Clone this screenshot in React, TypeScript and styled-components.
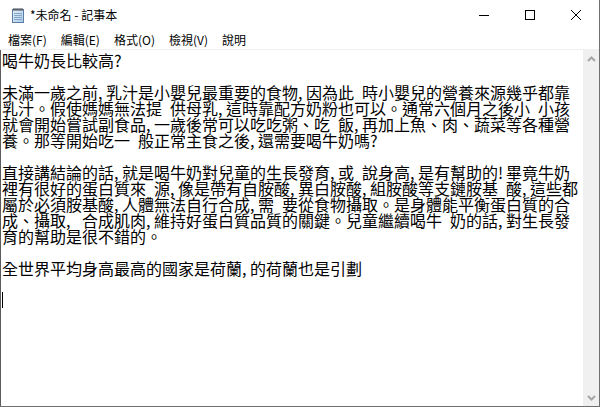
import React from "react";
import styled, { createGlobalStyle } from "styled-components";

const GlobalStyle = createGlobalStyle`
  html, body { margin: 0; padding: 0; background: #ffffff; overflow: hidden; }
  * { box-sizing: border-box; }
`;

const UI_FONT = `"Noto Sans CJK TC", "Noto Sans", sans-serif`;

const Window = styled.div`
  width: 600px;
  height: 407px;
  display: flex;
  flex-direction: column;
  background: #ffffff;
  border-right: 1px solid #6f6f6f;
  border-bottom: 1px solid #6f6f6f;
  font-family: ${UI_FONT};
  color: #000;
`;

const TitleBar = styled.div`
  height: 30px;
  display: flex;
  align-items: center;
  flex-shrink: 0;
`;

const AppIcon = styled.svg`
  width: 16px;
  height: 16px;
  margin-left: 10px;
  margin-top: -1px;
`;

const TitleText = styled.div`
  margin-left: 4px;
  font-size: 12px;
  line-height: 16px;
  flex: 1;
`;

const ControlButton = styled.div`
  width: 46px;
  height: 30px;
  display: flex;
  align-items: center;
  justify-content: center;
`;

const MenuBar = styled.div`
  height: 18px;
  padding-top: 1px;
  display: flex;
  border-bottom: 1px solid #f0f0f0;
  flex-shrink: 0;
  box-sizing: content-box;
`;

const MenuItem = styled.div`
  padding: 0 7px;
  font-size: 12px;
  line-height: 18px;
  white-space: nowrap;
  &:first-child {
    padding-left: 8px;
  }
`;

const EditArea = styled.div`
  flex: 1;
  display: flex;
  min-height: 0;
`;

const TextPane = styled.div`
  flex: 1;
  border-left: 1px solid #5c5c5c;
  padding: 2px 0 0 1px;
  overflow: hidden;
`;

const Line = styled.div`
  height: 16px;
  font-family: "Noto Sans CJK TC", "Noto Sans CJK SC", sans-serif;
  font-size: 16px;
  line-height: 16px;
  white-space: pre;
  color: #000;
`;

const Half = styled.span`
  display: inline-block;
  width: 8px;
`;

const Caret = styled.span`
  display: inline-block;
  width: 1px;
  height: 16px;
  background: #000;
  vertical-align: top;
`;

const ScrollBar = styled.div`
  width: 16px;
  background: #f0f0f0;
  display: flex;
  flex-direction: column;
  justify-content: space-between;
`;

const ScrollArrow = styled.div`
  height: 17px;
  display: flex;
  align-items: center;
  justify-content: center;
`;

const lines: string[] = [
  "喝牛奶長比較高?",
  "",
  "未滿一歲之前,乳汁是小嬰兒最重要的食物,因為此 時小嬰兒的營養來源幾乎都靠",
  "乳汁。假使媽媽無法提 供母乳,這時靠配方奶粉也可以。通常六個月之後小 小孩",
  "就會開始嘗試副食品,一歲後常可以吃吃粥、吃 飯,再加上魚、肉、蔬菜等各種營",
  "養。那等開始吃一 般正常主食之後,還需要喝牛奶嗎?",
  "",
  "直接講結論的話,就是喝牛奶對兒童的生長發育,或 說身高,是有幫助的!畢竟牛奶",
  "裡有很好的蛋白質來 源,像是帶有自胺酸,異白胺酸,組胺酸等支鏈胺基 酸,這些都",
  "屬於必須胺基酸,人體無法自行合成,需 要從食物攝取。是身體能平衡蛋白質的合",
  "成、攝取, 合成肌肉,維持好蛋白質品質的關鍵。兒童繼續喝牛 奶的話,對生長發",
  "育的幫助是很不錯的。",
  "",
  "全世界平均身高最高的國家是荷蘭,的荷蘭也是引劃",
  "",
];

function renderLine(s: string): React.ReactNode[] {
  const parts: React.ReactNode[] = [];
  let buf = "";
  let k = 0;
  for (const ch of s) {
    if (ch.charCodeAt(0) < 128) {
      if (buf) {
        parts.push(buf);
        buf = "";
      }
      parts.push(<Half key={k++}>{ch}</Half>);
    } else {
      buf += ch;
    }
  }
  if (buf) parts.push(buf);
  return parts;
}

const NotepadIcon = () => (
  <AppIcon viewBox="0 0 16 16">
    <defs>
      <linearGradient id="pg" x1="0" y1="0" x2="1" y2="1">
        <stop offset="0" stopColor="#e6f1fb" />
        <stop offset="1" stopColor="#a9c9ea" />
      </linearGradient>
    </defs>
    <rect x="2.5" y="2.5" width="11" height="13" fill="url(#pg)" stroke="#5b7da3" />
    {[6, 8, 10, 12].map((y) => (
      <line key={y} x1="4" x2="12" y1={y + 0.5} y2={y + 0.5} stroke="#87a7c9" />
    ))}
    {[4, 6, 8, 10, 12].map((x) => (
      <rect key={x} x={x - 0.5} y="1" width="1" height="3" fill="#4a4a4a" />
    ))}
  </AppIcon>
);

const Chevron = ({ up }: { up: boolean }) => (
  <svg width="9" height="6" viewBox="0 0 9 6">
    <polyline
      points={up ? "1,5 4.5,1.5 8,5" : "1,1 4.5,4.5 8,1"}
      fill="none"
      stroke="#a6a6a6"
      strokeWidth="2"
    />
  </svg>
);

export default function App() {
  return (
    <>
      <GlobalStyle />
      <Window>
        <TitleBar>
          <NotepadIcon />
          <TitleText>*未命名 - 記事本</TitleText>
          <ControlButton>
            <svg width="10" height="10" viewBox="0 0 10 10">
              <line x1="0" x2="10" y1="5.5" y2="5.5" stroke="#000" />
            </svg>
          </ControlButton>
          <ControlButton>
            <svg width="10" height="10" viewBox="0 0 10 10">
              <rect x="0.5" y="0.5" width="9" height="9" fill="none" stroke="#000" />
            </svg>
          </ControlButton>
          <ControlButton>
            <svg width="10" height="10" viewBox="0 0 10 10">
              <path d="M0 0 L10 10 M10 0 L0 10" stroke="#000" strokeWidth="1" />
            </svg>
          </ControlButton>
        </TitleBar>
        <MenuBar>
          <MenuItem>檔案(F)</MenuItem>
          <MenuItem>編輯(E)</MenuItem>
          <MenuItem>格式(O)</MenuItem>
          <MenuItem>檢視(V)</MenuItem>
          <MenuItem>說明</MenuItem>
        </MenuBar>
        <EditArea>
          <TextPane>
            {lines.map((l, i) => (
              <Line key={i}>{renderLine(l)}</Line>
            ))}
            <Line>
              <Caret />
            </Line>
          </TextPane>
          <ScrollBar>
            <ScrollArrow>
              <Chevron up />
            </ScrollArrow>
            <ScrollArrow>
              <Chevron up={false} />
            </ScrollArrow>
          </ScrollBar>
        </EditArea>
      </Window>
    </>
  );
}
